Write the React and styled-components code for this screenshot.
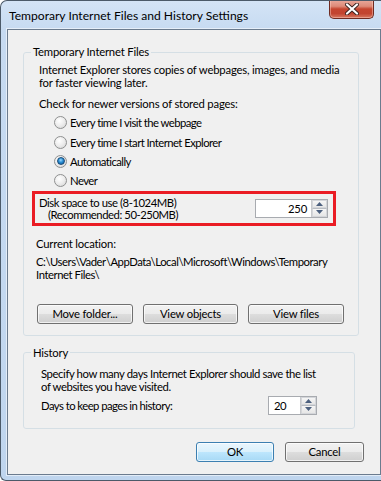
import styled, { createGlobalStyle } from 'styled-components';

const GlobalStyle = createGlobalStyle`
  html, body {
    margin: 0;
    padding: 0;
  }
  body {
    width: 381px;
    height: 481px;
    overflow: hidden;
    background: #ffffff;
    font-family: Lato, "Open Sans", sans-serif;
    font-size: 11.3px;
    letter-spacing: -0.2px;
    color: #000;
  }
`;

const Window = styled.div`
  width: 381px;
  height: 481px;
  box-sizing: border-box;
  display: flex;
  flex-direction: column;
  border: 1px solid #4c5a69;
  border-right: none;
  border-radius: 7px 0 0 6px;
  background: linear-gradient(180deg, #d4e4f6 0px, #c6daf1 30px, #c3d8f0 60%, #bfd5ee 100%);
  padding: 0 0 5px 6px;
  overflow: hidden;
`;

const TitleBar = styled.div`
  height: 28px;
  flex: none;
  display: flex;
  align-items: flex-start;
  justify-content: space-between;
  padding-right: 7px;
`;

const Title = styled.div`
  font-size: 12.1px;
  letter-spacing: 0;
  line-height: 16px;
  padding: 7px 0 0 2px;
  color: #000;
`;

const CloseButton = styled.div`
  width: 43px;
  height: 18px;
  margin-top: -1px;
  border: 1px solid #6f2b22;
  border-top: none;
  border-radius: 0 0 5px 5px;
  background: linear-gradient(180deg, #e9a99c 0%, #dd8a78 35%, #c5452f 50%, #c24430 75%, #d7775f 100%);
  box-shadow: inset 0 0 0 1px rgba(255, 210, 200, 0.45);
  display: flex;
  align-items: center;
  justify-content: center;
`;

const Client = styled.div`
  flex: 1;
  border: 1px solid #6b7b8e;
  box-shadow: 0 0 0 1px rgba(255, 255, 255, 0.55);
  background: #f0f0f0;
  display: flex;
  flex-direction: column;
  padding: 0 0 0 15px;
`;

const Group = styled.fieldset`
  margin: ${p => p.$top}px 0 0 0;
  width: ${p => p.$width}px;
  box-sizing: border-box;
  border: 1px solid #d5dfe5;
  border-radius: 3px;
  padding: 0 0 ${p => p.$bottom}px 0;
  min-width: 0;
`;

const Legend = styled.legend`
  margin-left: 7px;
  padding: 0 2px;
  line-height: 14px;
`;

const Text = styled.div`
  line-height: 13px;
  margin: ${p => p.$top || 0}px 0 0 ${p => p.$left || 0}px;
  letter-spacing: ${p => p.$tight ?? -0.2}px;
  white-space: nowrap;
`;

const RadioList = styled.div`
  display: flex;
  flex-direction: column;
  margin: 3px 0 0 30px;
`;

const RadioRow = styled.label`
  height: 19.4px;
  display: flex;
  align-items: center;
  gap: 3px;
  letter-spacing: -0.55px;
`;

const RadioDot = styled.span`
  width: 11px;
  height: 11px;
  border-radius: 50%;
  border: 1px solid #8f9090;
  background: radial-gradient(circle at 40% 35%, #ffffff 0%, #ececec 50%, #d2d2d2 100%);
  display: flex;
  align-items: center;
  justify-content: center;
  flex: none;

  &::after {
    content: '';
    display: ${p => (p.$checked ? 'block' : 'none')};
    width: 6px;
    height: 6px;
    border-radius: 50%;
    border: 0.5px solid #1c4c78;
    background: radial-gradient(circle at 45% 35%, #9ad8ff 0%, #2a8fd4 45%, #0b5292 100%);
  }
`;

const Highlight = styled.div`
  margin: 0 0 0 8px;
  width: 304px;
  height: 35px;
  box-sizing: border-box;
  border: 3px solid #ea1c24;
  display: flex;
  align-items: center;
  justify-content: space-between;
  padding: 0 5px 0 4px;
`;

const DiskText = styled.div`
  line-height: 12px;
  margin-top: 1px;
  letter-spacing: -0.45px;
`;

const Indent = styled.div`
  padding-left: 9px;
`;

const Spin = styled.div`
  display: flex;
  height: 19px;
  box-sizing: border-box;
  border: 1px solid #a8abb0;
  background: #fff;
`;

const SpinValue = styled.div`
  width: ${p => p.$width}px;
  line-height: 17px;
  text-align: ${p => p.$align};
  padding: 0 ${p => (p.$align === 'right' ? 4 : 0)}px 0 ${p => (p.$align === 'left' ? 5 : 0)}px;
  box-sizing: border-box;
`;

const SpinButtons = styled.div`
  width: 15px;
  display: flex;
  flex-direction: column;
  border-left: 1px solid #c8cacd;
`;

const SpinArrow = styled.div`
  flex: 1;
  display: flex;
  align-items: center;
  justify-content: center;
  background: linear-gradient(180deg, #f6f6f6 0%, #e6e6e6 100%);
  border: 1px solid #d4d6da;
  box-sizing: border-box;

  & + & {
    border-top: 1px solid #b8bcc2;
  }
`;

const ButtonRow = styled.div`
  display: flex;
  gap: ${p => p.$gap}px;
  margin: ${p => p.$top}px 0 0 ${p => p.$left || 0}px;
  justify-content: ${p => p.$justify || 'flex-start'};
  padding-right: ${p => p.$right || 0}px;
`;

const Button = styled.div`
  width: ${p => p.$width}px;
  height: 20px;
  box-sizing: border-box;
  border: 1px solid ${p => (p.$default ? '#3c7fb1' : '#707070')};
  border-radius: 3px;
  display: flex;
  align-items: center;
  justify-content: center;
  background: ${p =>
    p.$default
      ? 'linear-gradient(180deg, #eaf6fd 0%, #d9f0fc 50%, #bee6fd 50%, #a7d9f5 100%)'
      : 'linear-gradient(180deg, #f2f2f2 0%, #ebebeb 50%, #dddddd 50%, #cfcfcf 100%)'};
  box-shadow: inset 0 0 0 1px rgba(255, 255, 255, 0.7);
`;

const DaysRow = styled.div`
  display: flex;
  align-items: center;
  justify-content: space-between;
  margin: 3px 37px 0 17px;
  letter-spacing: -0.55px;
`;

const Arrow = ({ up }) => (
  <svg width="7" height="4" viewBox="0 0 7 4">
    <path d={up ? 'M0 4 L3.5 0 L7 4 Z' : 'M0 0 L3.5 4 L7 0 Z'} fill="#4c607f" />
  </svg>
);

const SpinBox = ({ value, width, align }) => (
  <Spin>
    <SpinValue $width={width} $align={align}>{value}</SpinValue>
    <SpinButtons>
      <SpinArrow><Arrow up /></SpinArrow>
      <SpinArrow><Arrow /></SpinArrow>
    </SpinButtons>
  </Spin>
);

const radios = [
  { label: 'Every time I visit the webpage' },
  { label: 'Every time I start Internet Explorer' },
  { label: 'Automatically', checked: true },
  { label: 'Never' },
];

export default function App() {
  return (
    <>
      <GlobalStyle />
      <Window>
        <TitleBar>
          <Title>Temporary Internet Files and History Settings</Title>
          <CloseButton>
            <svg width="14" height="12" viewBox="0 0 14 12">
              <path d="M2 1.5 L12 10.5 M12 1.5 L2 10.5" stroke="#3b2320" strokeWidth="4" strokeLinecap="round" />
              <path d="M2 1.5 L12 10.5 M12 1.5 L2 10.5" stroke="#ffffff" strokeWidth="2.2" strokeLinecap="round" />
            </svg>
          </CloseButton>
        </TitleBar>
        <Client>
          <Group $top={15} $width={336} $bottom={11}>
            <Legend>Temporary Internet Files</Legend>
            <Text $top={4} $left={15}>
              Internet Explorer stores copies of webpages, images, and media
              <br />
              for faster viewing later.
            </Text>
            <Text $top={8} $left={15}>Check for newer versions of stored pages:</Text>
            <RadioList>
              {radios.map(r => (
                <RadioRow key={r.label}>
                  <RadioDot $checked={r.checked} />
                  {r.label}
                </RadioRow>
              ))}
            </RadioList>
            <Highlight>
              <DiskText>
                Disk space to use (8-1024MB)
                <Indent>(Recommended: 50-250MB)</Indent>
              </DiskText>
              <SpinBox value="250" width={55} align="right" />
            </Highlight>
            <Text $top={11} $left={12}>Current location:</Text>
            <Text $top={5} $left={12} $tight={-0.45}>
              C:\Users\Vader\AppData\Local\Microsoft\Windows\Temporary
              <br />
              Internet Files\
            </Text>
            <ButtonRow $top={23} $left={13} $gap={10}>
              <Button $width={96}>Move folder...</Button>
              <Button $width={95}>View objects</Button>
              <Button $width={96}>View files</Button>
            </ButtonRow>
          </Group>
          <Group $top={10} $width={332} $bottom={13}>
            <Legend>History</Legend>
            <Text $top={7} $left={17} $tight={-0.4}>
              Specify how many days Internet Explorer should save the list
              <br />
              of websites you have visited.
            </Text>
            <DaysRow>
              <span>Days to keep pages in history:</span>
              <SpinBox value="20" width={31} align="left" />
            </DaysRow>
          </Group>
          <ButtonRow $top={13} $gap={11} $justify="flex-end" $right={16}>
            <Button $width={78} $default>OK</Button>
            <Button $width={79}>Cancel</Button>
          </ButtonRow>
        </Client>
      </Window>
    </>
  );
}
